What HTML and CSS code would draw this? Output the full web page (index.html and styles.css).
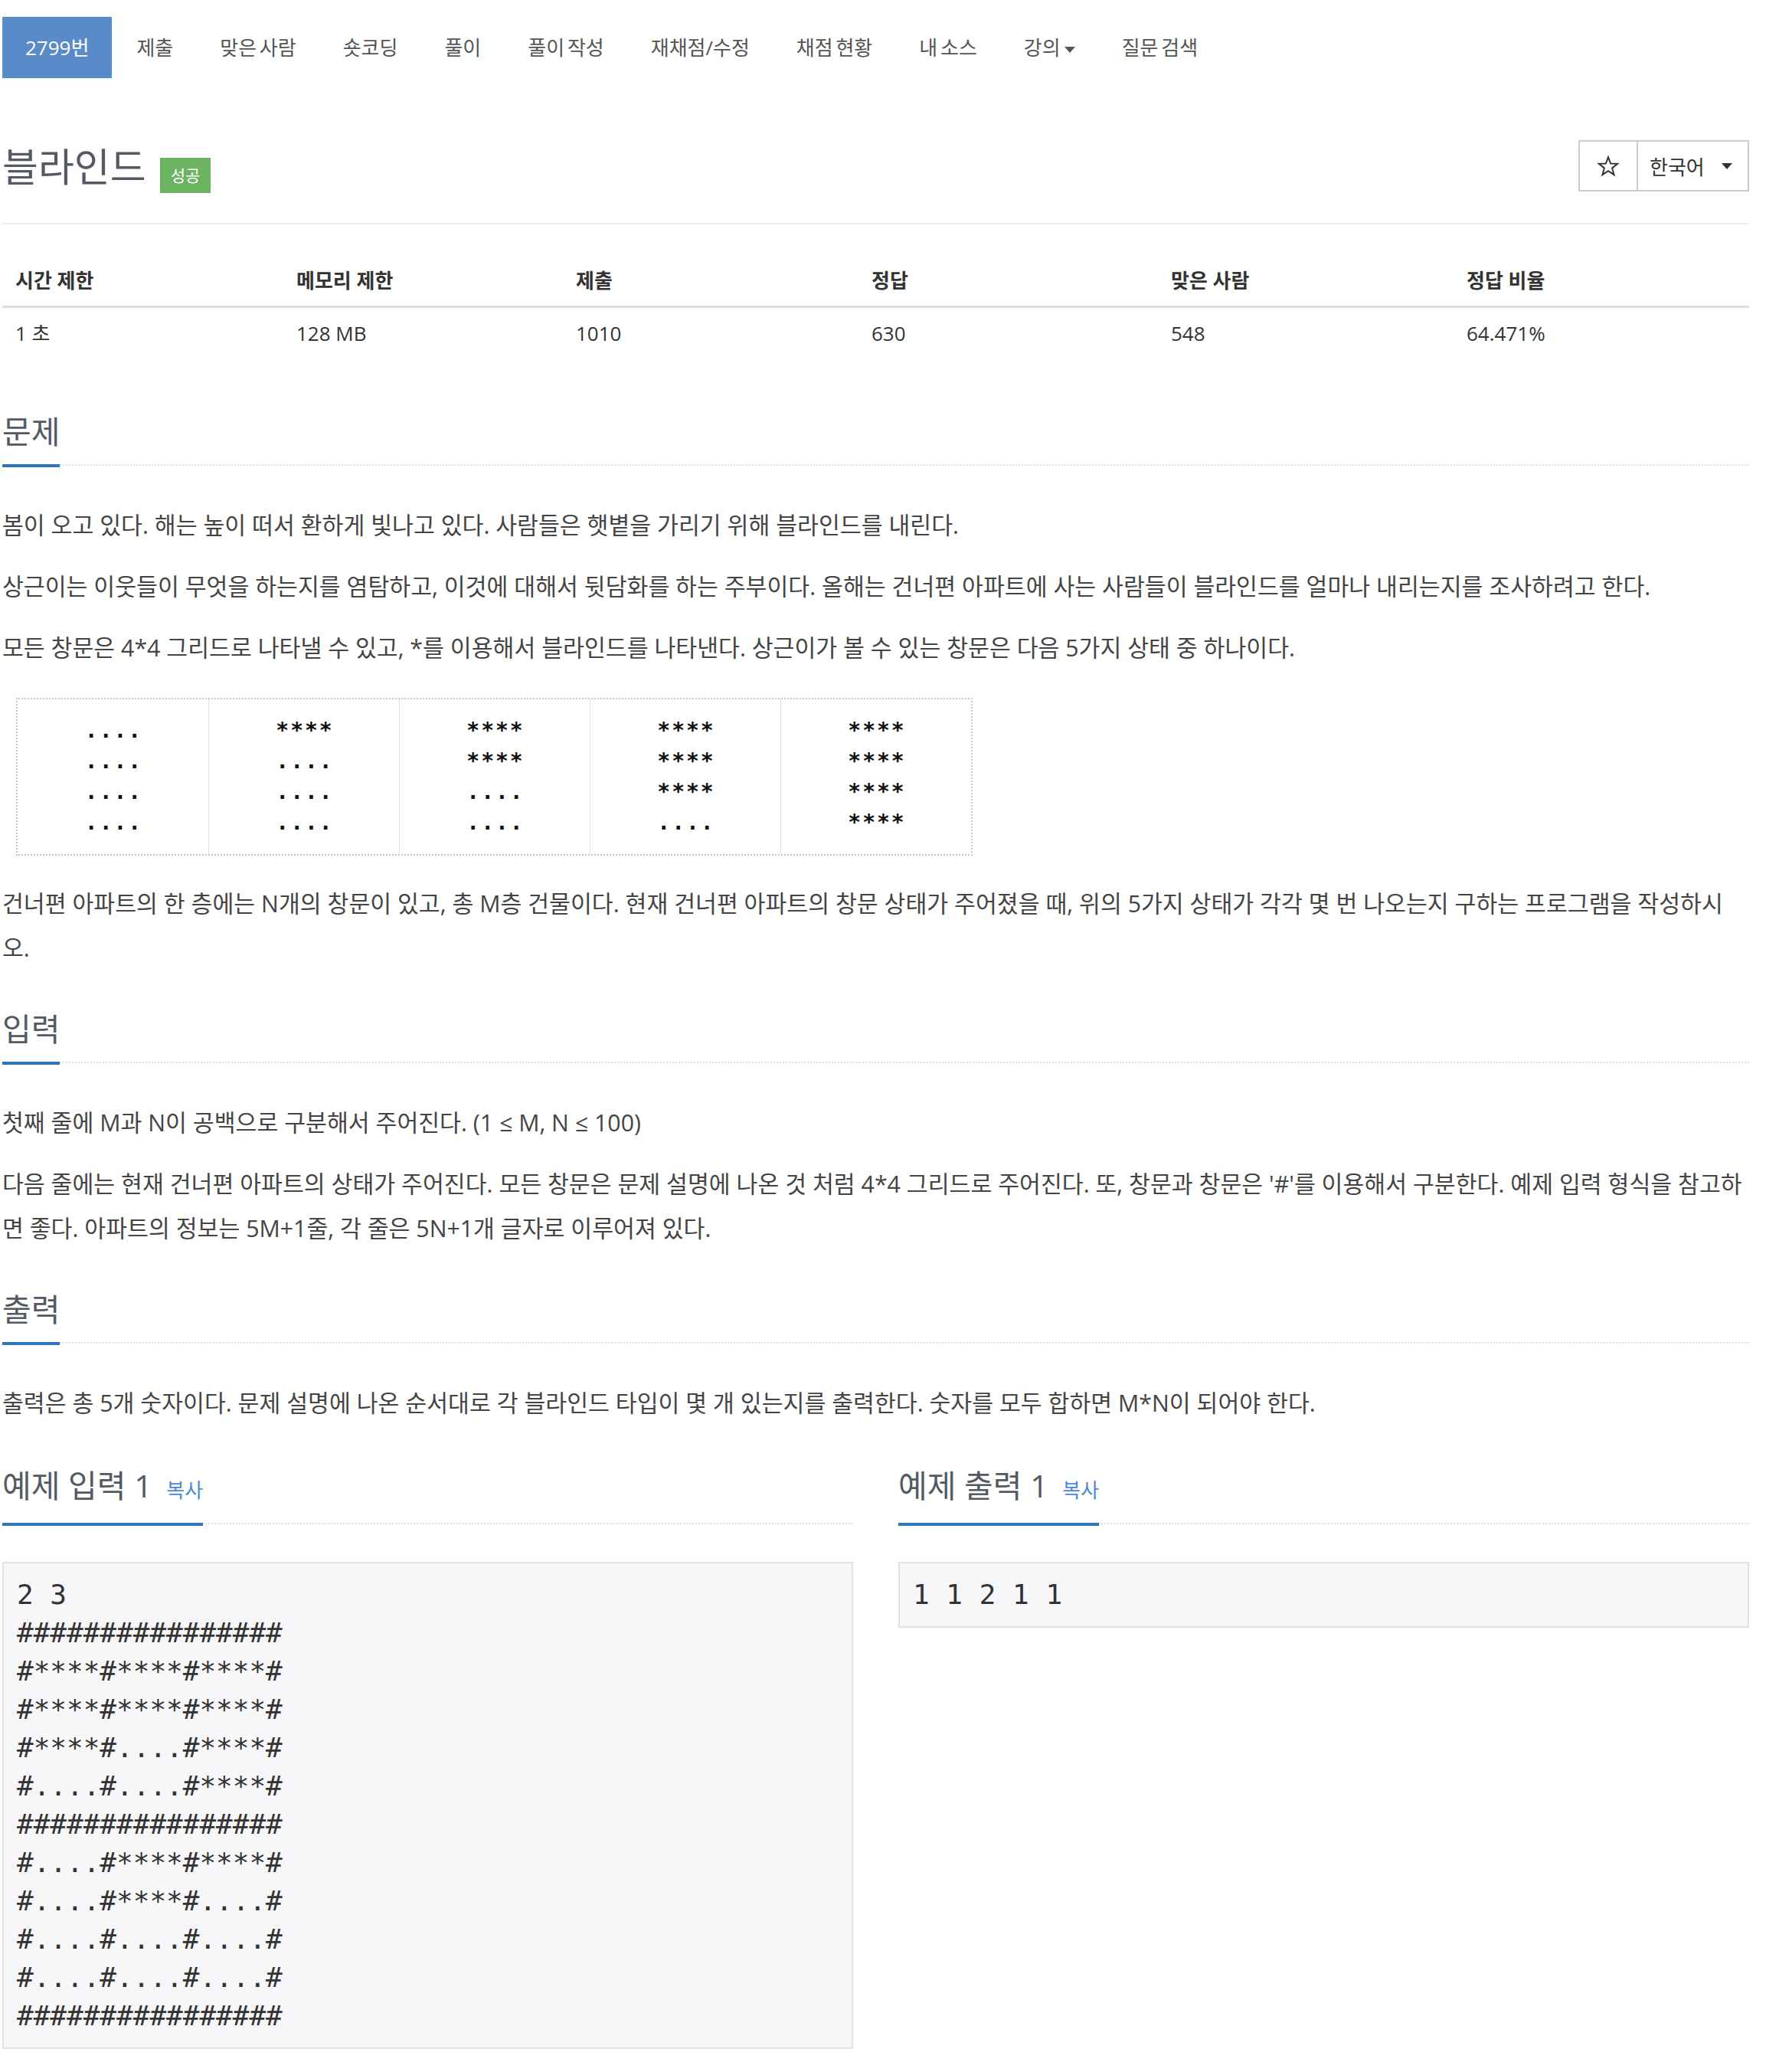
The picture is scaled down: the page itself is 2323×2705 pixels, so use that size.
FILE: index.html
```html
<!DOCTYPE html>
<html lang="ko">
<head>
  <meta charset="UTF-8">
  <title>2799번: 블라인드</title>
  <link rel="stylesheet" href="styles.css">
</head>
<body>
<div class="wrap">
  <ul class="tabs">
    <li class="active"><a href="#">2799번</a></li>
    <li><a href="#">제출</a></li>
    <li><a href="#">맞은 사람</a></li>
    <li><a href="#">숏코딩</a></li>
    <li><a href="#">풀이</a></li>
    <li><a href="#">풀이 작성</a></li>
    <li><a href="#">재채점/수정</a></li>
    <li><a href="#">채점 현황</a></li>
    <li><a href="#">내 소스</a></li>
    <li><a href="#">강의<span class="caret"></span></a></li>
    <li><a href="#">질문 검색</a></li>
  </ul>

  <div class="page-header">
    <h1 class="title">블라인드<span class="badge">성공</span></h1>
    <div class="btn-group">
      <button class="btn btn-star" type="button">
        <svg width="30" height="28" viewBox="0 0 24 24" fill="none" stroke="#333" stroke-width="1.7" stroke-linejoin="miter">
          <polygon points="12,1.8 14.7,9 22.4,9.3 16.4,14.1 18.5,21.6 12,17.3 5.5,21.6 7.6,14.1 1.6,9.3 9.3,9"/>
        </svg>
      </button>
      <button class="btn btn-lang" type="button">한국어<span class="caret"></span></button>
    </div>
  </div>

  <table class="info">
    <colgroup>
      <col style="width:367px"><col style="width:365px"><col style="width:386px">
      <col style="width:391px"><col style="width:386px"><col style="width:386px">
    </colgroup>
    <thead>
      <tr><th>시간 제한</th><th>메모리 제한</th><th>제출</th><th>정답</th><th>맞은 사람</th><th>정답 비율</th></tr>
    </thead>
    <tbody>
      <tr><td>1 초</td><td>128 MB</td><td>1010</td><td>630</td><td>548</td><td>64.471%</td></tr>
    </tbody>
  </table>

  <section class="section">
    <div class="headline"><h2>문제</h2></div>
    <div class="desc">
      <p>봄이 오고 있다. 해는 높이 떠서 환하게 빛나고 있다. 사람들은 햇볕을 가리기 위해 블라인드를 내린다.</p>
      <p>상근이는 이웃들이 무엇을 하는지를 염탐하고, 이것에 대해서 뒷담화를 하는 주부이다. 올해는 건너편 아파트에 사는 사람들이 블라인드를 얼마나 내리는지를 조사하려고 한다.</p>
      <p>모든 창문은 4*4 그리드로 나타낼 수 있고, *를 이용해서 블라인드를 나타낸다. 상근이가 볼 수 있는 창문은 다음 5가지 상태 중 하나이다.</p>
      <div class="blinds">
        <div>....<br>....<br>....<br>....</div>
        <div>****<br>....<br>....<br>....</div>
        <div>****<br>****<br>....<br>....</div>
        <div>****<br>****<br>****<br>....</div>
        <div>****<br>****<br>****<br>****</div>
      </div>
      <p>건너편 아파트의 한 층에는 N개의 창문이 있고, 총 M층 건물이다. 현재 건너편 아파트의 창문 상태가 주어졌을 때, 위의 5가지 상태가 각각 몇 번 나오는지 구하는 프로그램을 작성하시<br>오.</p>
    </div>
  </section>

  <section class="section">
    <div class="headline"><h2>입력</h2></div>
    <div class="desc">
      <p>첫째 줄에 M과 N이 공백으로 구분해서 주어진다. (1 ≤ M, N ≤ 100)</p>
      <p>다음 줄에는 현재 건너편 아파트의 상태가 주어진다. 모든 창문은 문제 설명에 나온 것 처럼 4*4 그리드로 주어진다. 또, 창문과 창문은 '#'를 이용해서 구분한다. 예제 입력 형식을 참고하<br>면 좋다. 아파트의 정보는 5M+1줄, 각 줄은 5N+1개 글자로 이루어져 있다.</p>
    </div>
  </section>

  <section class="section">
    <div class="headline"><h2>출력</h2></div>
    <div class="desc">
      <p>출력은 총 5개 숫자이다. 문제 설명에 나온 순서대로 각 블라인드 타입이 몇 개 있는지를 출력한다. 숫자를 모두 합하면 M*N이 되어야 한다.</p>
    </div>
  </section>

  <div class="samples">
    <section>
      <div class="headline"><h2>예제 입력 1 <span class="copy">복사</span></h2></div>
      <pre class="sample">2 3
################
#****#****#****#
#****#****#****#
#****#....#****#
#....#....#****#
################
#....#****#****#
#....#****#....#
#....#....#....#
#....#....#....#
################</pre>
    </section>
    <section>
      <div class="headline"><h2>예제 출력 1 <span class="copy">복사</span></h2></div>
      <pre class="sample">1 1 2 1 1</pre>
    </section>
  </div>
</div>
</body>
</html>
```

FILE: styles.css
```css
body { margin: 0; font-family: "Open Sans", "Noto Sans CJK KR", sans-serif; color: #333; background: #fff; }
.wrap { width: 2281px; margin-left: 3px; padding-bottom: 40px; }

/* --- top tabs --- */
.tabs {
  display: flex;
  list-style: none;
  margin: 22px 0 0;
  padding: 0;
  font-size: 26px;
  word-spacing: -3px;
}
.tabs li + li { margin-left: 3px; }
.tabs a {
  display: block;
  padding: 23px 29px;
  line-height: 34px;
  color: #555;
  text-decoration: none;
}
.tabs .active a { background: #588bc8; color: #fff; padding: 23px 30px; }

.caret {
  display: inline-block;
  width: 0;
  height: 0;
  margin-left: 5px;
  vertical-align: middle;
  border-top: 8px solid;
  border-left: 7px solid transparent;
  border-right: 7px solid transparent;
}

/* --- title row --- */
.page-header {
  display: flex;
  justify-content: space-between;
  align-items: center;
  margin-top: 81px;
  padding-bottom: 41px;
  border-bottom: 2px solid #eee;
}
.title {
  display: flex;
  align-items: flex-end;
  gap: 18px;
  margin: 0;
  font-size: 51px;
  line-height: 66px;
  font-weight: normal;
  color: #535a63;
}
.badge {
  font-size: 21px;
  line-height: 46px;
  padding: 0 14px;
  margin-bottom: -2px;
  background: #6db462;
  color: #fff;
}

.btn-group { display: flex; }
.btn {
  box-sizing: border-box;
  display: flex;
  align-items: center;
  height: 67px;
  border: 2px solid #ccc;
  background: #fff;
  font-family: inherit;
  font-size: 26px;
  color: #333;
}
.btn + .btn { margin-left: -2px; }
.btn-star { width: 78px; padding: 0; justify-content: center; }
.btn-lang { width: 147px; padding: 0 16px 0 15px; }
.btn-lang .caret { margin-left: 22px; color: #333; }

/* --- limits table --- */
.info {
  width: 100%;
  table-layout: fixed;
  border-collapse: separate;
  border-spacing: 0;
  margin: 40px 0 74px;
  font-size: 26px;
}
.info th, .info td { text-align: left; padding: 15px 17px; line-height: 36px; }
.info th { font-weight: bold; border-bottom: 3px solid #ddd; }

/* --- sections --- */
.section { margin-bottom: 55px; }
.headline {
  display: flex;
  border-bottom: 2px dotted #e2e2e6;
  margin-bottom: 49px;
}
.headline h2 {
  margin: 0 0 -4px;
  padding-bottom: 22px;
  border-bottom: 4px solid #2f74b9;
  font-size: 41px;
  line-height: 42px;
  font-weight: normal;
  color: #535a63;
}
.copy { margin-left: 8px; font-size: 26px; color: #4a8bd1; }

.desc p { margin: 0 0 22px; font-size: 30.3px; line-height: 58px; color: #444; }
.desc p:last-child { margin-bottom: 0; }

.blinds {
  box-sizing: border-box;
  display: grid;
  grid-template-columns: repeat(5, 1fr);
  width: 1249px;
  margin: 36px 0 34px 18px;
  border: 2px dotted #c8c8c8;
  font: bold 28px/40px "DejaVu Sans Mono", monospace;
  color: #111;
}
.blinds div {
  padding: 21px 0 21px 2px;
  text-align: center;
  letter-spacing: 2px;
}
.blinds div + div { border-left: 1px dotted #c8c8c8; }

/* --- samples --- */
.samples {
  display: grid;
  grid-template-columns: 1fr 1fr;
  column-gap: 59px;
  margin-top: 57px;
}
.sample {
  margin: 0;
  padding: 16px 17px;
  font: 36px/50px "DejaVu Sans Mono", monospace;
  color: #333;
  background: #f7f7f9;
  border: 2px solid #e1e1e8;
}
```
